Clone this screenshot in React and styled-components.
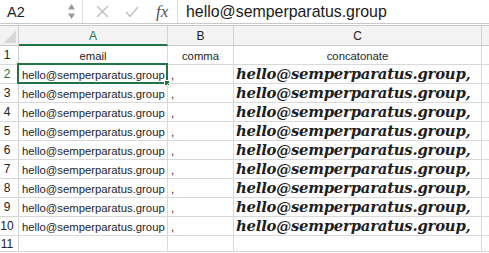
import React from "react";
import styled, { createGlobalStyle } from "styled-components";

const GlobalStyle = createGlobalStyle`
  html, body {
    margin: 0;
    padding: 0;
    background: #ffffff;
    overflow: hidden;
  }
  * {
    box-sizing: border-box;
  }
`;

const GREEN = "#227447";
const GRID = "#d9d9d9";

const rows = [2, 3, 4, 5, 6, 7, 8, 9, 10];
const EMAIL = "hello@semperparatus.group";

const NameUp = () => (
  <svg width="9" height="18" viewBox="0 0 9 18">
    <path d="M4.5 1 L8 6.5 L1 6.5 Z" fill="#9a9a9a" />
    <path d="M4.5 16 L8 10.5 L1 10.5 Z" fill="#9a9a9a" />
  </svg>
);

const CrossIcon = () => (
  <svg width="13" height="13" viewBox="0 0 13 13">
    <path d="M1.5 1.5 L11.5 11.5 M11.5 1.5 L1.5 11.5" stroke="#c4c4c4" strokeWidth="1.6" strokeLinecap="round" />
  </svg>
);

const CheckIcon = () => (
  <svg width="14" height="12" viewBox="0 0 14 12">
    <path d="M1.5 6.5 L5 10.5 L12.5 1.5" stroke="#c4c4c4" strokeWidth="1.6" fill="none" strokeLinecap="round" strokeLinejoin="round" />
  </svg>
);

const App = () => {
  return (
    <>
      <GlobalStyle />
      <Page>
        <FormulaBar>
          <NameBox>
            <NameText>A2</NameText>
            <NameUp />
          </NameBox>
          <Actions>
            <CrossIcon />
            <CheckIcon />
            <Fx>fx</Fx>
          </Actions>
          <FormulaText>{EMAIL}</FormulaText>
        </FormulaBar>

        <Sheet>
          <Corner />
          <ColHead $active>A</ColHead>
          <ColHead>B</ColHead>
          <ColHead>C</ColHead>
          <ColHead />

          <RowHead>1</RowHead>
          <LabelCell>email</LabelCell>
          <LabelCell>comma</LabelCell>
          <LabelCell>concatonate</LabelCell>
          <Cell />

          {rows.map((n) => (
            <React.Fragment key={n}>
              <RowHead $active={n === 2}>{n}</RowHead>
              <Cell>
                {EMAIL}
                {n === 2 && (
                  <Selection>
                    <Handle />
                  </Selection>
                )}
              </Cell>
              <Cell>,</Cell>
              <ConcatCell>{EMAIL},</ConcatCell>
              <Cell />
            </React.Fragment>
          ))}

          <RowHead $short>11</RowHead>
          <Cell />
          <Cell />
          <Cell />
          <Cell />
        </Sheet>
      </Page>
    </>
  );
};

const Page = styled.div`
  width: 489px;
  height: 253px;
  overflow: hidden;
  font-family: "Liberation Sans", Arial, sans-serif;
  color: #1e1e1e;
`;

const FormulaBar = styled.div`
  display: flex;
  align-items: center;
  height: 26px;
  border-bottom: 3px double #c9c9c9;
`;

const NameBox = styled.div`
  display: flex;
  align-items: center;
  justify-content: space-between;
  width: 83px;
  height: 23px;
  padding: 0 6px 0 7px;
  border-right: 1px solid #dedede;
`;

const NameText = styled.span`
  font-size: 14.5px;
`;

const Actions = styled.div`
  display: flex;
  align-items: center;
  gap: 16px;
  width: 95px;
  height: 23px;
  padding-left: 13px;
  border-right: 1px solid #dedede;
`;

const Fx = styled.span`
  font-family: "Liberation Serif", "Times New Roman", serif;
  font-style: italic;
  font-size: 17px;
  color: #555;
  margin-left: 1px;
`;

const FormulaText = styled.div`
  padding-left: 8px;
  font-size: 15.9px;
  color: #1a1a1a;
`;

const Sheet = styled.div`
  display: grid;
  grid-template-columns: 19px 149px 66px 248px 20px;
  grid-template-rows: 20px repeat(10, 19px) 16px;
`;

const Corner = styled.div`
  background: linear-gradient(135deg, #f3f3f3 50%, #d8d8d8 50%);
  border-right: 1px solid #cfcfcf;
  border-bottom: 1px solid #c8c8c8;
  background-size: 12px 12px;
  background-position: right 2px bottom 2px;
  background-repeat: no-repeat;
  background-color: #f3f3f3;
`;

const ColHead = styled.div`
  display: flex;
  align-items: center;
  justify-content: center;
  background: #f3f3f3;
  border-right: 1px solid #d2d2d2;
  border-bottom: ${({ $active }) => ($active ? `2px solid ${GREEN}` : "1px solid #c8c8c8")};
  color: ${({ $active }) => ($active ? GREEN : "#222")};
  font-size: 12px;
  padding-top: ${({ $active }) => ($active ? "1px" : "0")};
`;

const RowHead = styled.div`
  display: flex;
  align-items: ${({ $short }) => ($short ? "center" : "flex-end")};
  justify-content: center;
  padding: ${({ $short }) => ($short ? "0 4px 0 0" : "0 4px 2px 0")};
  border-right: 1px solid #d2d2d2;
  border-bottom: 1px solid ${GRID};
  color: ${({ $active }) => ($active ? GREEN : "#222")};
  font-size: 12px;
  line-height: 14px;
`;

const Cell = styled.div`
  position: relative;
  display: flex;
  align-items: flex-end;
  padding: 0 0 2px 3px;
  border-right: 1px solid ${GRID};
  border-bottom: 1px solid ${GRID};
  font-size: 11.3px;
  white-space: nowrap;
`;

const LabelCell = styled(Cell)`
  justify-content: center;
  padding-left: 0;
`;

const ConcatCell = styled(Cell)`
  padding-left: 2px;
  padding-bottom: 1px;
  font-family: "DejaVu Serif", Georgia, serif;
  font-weight: 700;
  font-style: italic;
  font-size: 14.8px;
  letter-spacing: -0.2px;
`;

const Selection = styled.div`
  position: absolute;
  left: -2px;
  top: -2px;
  right: -1px;
  bottom: -1px;
  border: 2px solid ${GREEN};
  pointer-events: none;
`;

const Handle = styled.div`
  position: absolute;
  right: -4px;
  bottom: -4px;
  width: 6px;
  height: 6px;
  background: ${GREEN};
  border: 1px solid #ffffff;
`;

export default App;
